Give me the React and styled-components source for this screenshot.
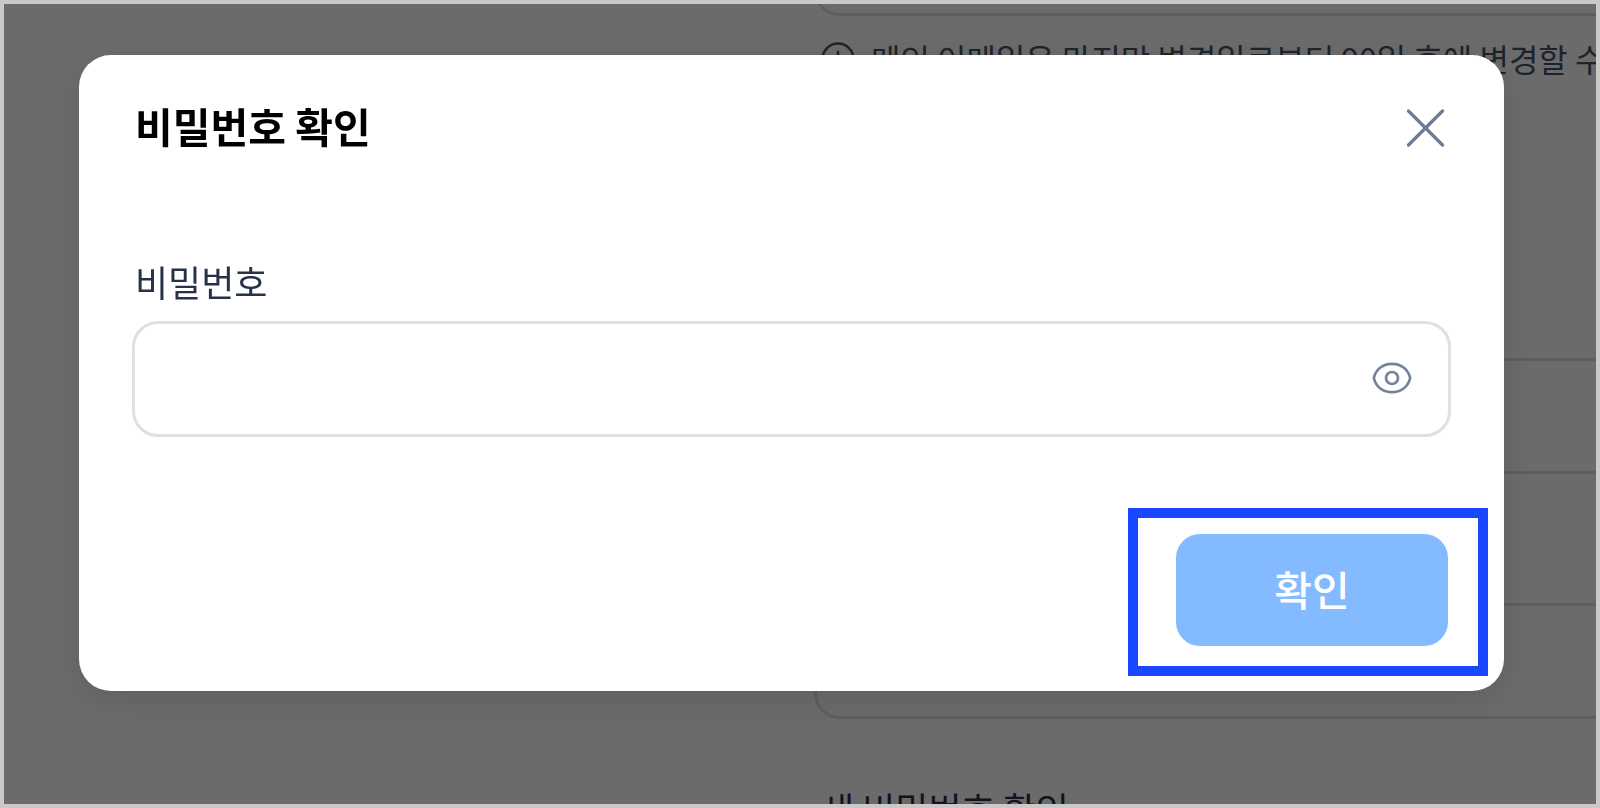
import React, { useState } from 'react';
import styled, { createGlobalStyle } from 'styled-components';

const App = () => {
  const [password, setPassword] = useState('');
  const [visible, setVisible] = useState(false);
  const [isModalOpen, setIsModalOpen] = useState(true);

  const closeModal = () => setIsModalOpen(false);

  return (
    <>
      <GlobalStyle />
      <Page>
        <Settings>
          <Field>
            <TextBox type="email" aria-label="메인 이메일" disabled />
            <Hint>
              <InfoIcon />
              <span>메인 이메일은 마지막 변경일로부터 90일 후에 변경할 수 있습니다.</span>
            </Hint>
          </Field>
          <PasswordGroup>
            <Field>
              <Label $inset={7} htmlFor="current">현재 비밀번호</Label>
              <TextBox id="current" type="password" />
            </Field>
            <Field>
              <Label $inset={7} htmlFor="next">새 비밀번호</Label>
              <TextBox id="next" type="password" />
            </Field>
            <Field>
              <Label $inset={7} htmlFor="repeat">새 비밀번호 확인</Label>
              <TextBox id="repeat" type="password" />
            </Field>
          </PasswordGroup>
        </Settings>
      </Page>

      {/* Modal */}
      {isModalOpen && (
        <ModalOverlay>
          <ModalContent role="dialog" aria-modal="true" aria-labelledby="modal-title">
            <ModalHeader>
              <h2 id="modal-title">비밀번호 확인</h2>
              <IconButton type="button" aria-label="닫기" onClick={closeModal}>
                <CloseIcon />
              </IconButton>
            </ModalHeader>
            <ModalBody>
              <Label $inset={3} htmlFor="password">비밀번호</Label>
              <PasswordBox>
                <input
                  id="password"
                  type={visible ? 'text' : 'password'}
                  value={password}
                  onChange={(e) => setPassword(e.target.value)}
                />
                <IconButton
                  type="button"
                  aria-label="비밀번호 표시"
                  onClick={() => setVisible(!visible)}
                >
                  <EyeIcon />
                </IconButton>
              </PasswordBox>
            </ModalBody>
            <ModalFooter>
              <Highlight>
                <ConfirmButton type="button">확인</ConfirmButton>
              </Highlight>
            </ModalFooter>
          </ModalContent>
        </ModalOverlay>
      )}
    </>
  );
};

export default App;

// Icons

const CloseIcon = () => (
  <svg width="40" height="40" viewBox="0 0 40 40" fill="none" stroke="#6b7a99" strokeWidth="3.2" strokeLinecap="round">
    <path d="M2.5 4 36.5 38M36.5 4 2.5 38" />
  </svg>
);

const EyeIcon = () => (
  <svg width="40" height="40" viewBox="0 0 40 40" fill="none" stroke="#74839b" strokeWidth="2.7" strokeLinejoin="round">
    <path d="M1.8 19C4 10 11 4.8 20 4.8S36 10 38.2 19C36 28 29 33.2 20 33.2S4 28 1.8 19Z" />
    <circle cx="20" cy="19" r="6" />
  </svg>
);

const InfoIcon = () => (
  <svg width="34" height="34" viewBox="0 0 34 34" fill="none" stroke="#475569" strokeWidth="2.5" strokeLinecap="round">
    <circle cx="17" cy="18" r="15.5" />
    <path d="M17 11V19M17 24.5V25" />
  </svg>
);

// Styled Components

const GlobalStyle = createGlobalStyle`
  * {
    box-sizing: border-box;
  }

  body {
    margin: 0;
    font-family: 'Noto Sans CJK KR', sans-serif;
  }

  button,
  input {
    font: inherit;
  }
`;

const Page = styled.main`
  height: 100vh;
  border: 4px solid #cdc8c8;
  background: #fff;
  overflow: hidden;
`;

/* scrolled partway down, so the email field is cut off at the top */
const Settings = styled.form`
  display: flex;
  flex-direction: column;
  gap: 206px;
  margin: -104px -60px 0 calc(50% + 14px);
`;

const PasswordGroup = styled.div`
  display: flex;
  flex-direction: column;
  gap: 59px;
`;

const Field = styled.div`
  display: flex;
  flex-direction: column;
`;

const Label = styled.label`
  padding: 0 ${(props) => props.$inset}px;
  margin-bottom: 10px;
  color: #27314a;
  font-size: 36px;
  line-height: 60px;
`;

const TextBox = styled.input`
  width: 100%;
  height: 116px;
  padding: 0 28px;
  border: 3px solid #dce1e7;
  border-radius: 26px;
  background: #fff;
`;

const Hint = styled.p`
  display: flex;
  align-items: center;
  gap: 16px;
  margin: 18px 0 0;
  padding-left: 7px;
  color: #475569;
  font-size: 32px;
  line-height: 48px;
  white-space: nowrap;

  svg {
    flex-shrink: 0;
  }
`;

const ModalOverlay = styled.div`
  position: fixed;
  inset: 4px;
  padding: 51px 92px 0 75px;
  background: rgba(0, 0, 0, 0.58);
  overflow: hidden;
`;

const ModalContent = styled.div`
  border-radius: 32px;
  background: #fff;
  box-shadow: 0 10px 36px rgba(0, 0, 0, 0.12);
`;

const ModalHeader = styled.header`
  display: flex;
  align-items: center;
  justify-content: space-between;
  padding: 42px 58px 0 56px;

  h2 {
    margin: 0;
    padding-bottom: 4px;
    color: #000;
    font-size: 41px;
    font-weight: 700;
    line-height: 56px;
  }
`;

const IconButton = styled.button`
  display: flex;
  padding: 0;
  border: none;
  background: none;
  cursor: pointer;
`;

const ModalBody = styled.div`
  display: flex;
  flex-direction: column;
  padding: 94px 53px 0;
`;

const PasswordBox = styled.div`
  display: flex;
  align-items: center;
  gap: 16px;
  height: 116px;
  padding: 0 36px 0 28px;
  border: 3px solid #dce1e7;
  border-radius: 26px;

  input {
    flex: 1;
    height: 60px;
    border: none;
    outline: none;
    background: none;
    font-size: 36px;
  }
`;

const ModalFooter = styled.footer`
  display: flex;
  justify-content: flex-end;
  padding: 71px 16px 15px;
`;

const Highlight = styled.div`
  padding: 16px 30px 20px 38px;
  border: 10px solid #1947ff;
`;

const ConfirmButton = styled.button`
  width: 272px;
  height: 112px;
  padding: 0 0 4px;
  border: none;
  border-radius: 24px;
  background: #84baff;
  color: #fff;
  font-size: 41px;
  font-weight: 500;
  cursor: pointer;
`;
